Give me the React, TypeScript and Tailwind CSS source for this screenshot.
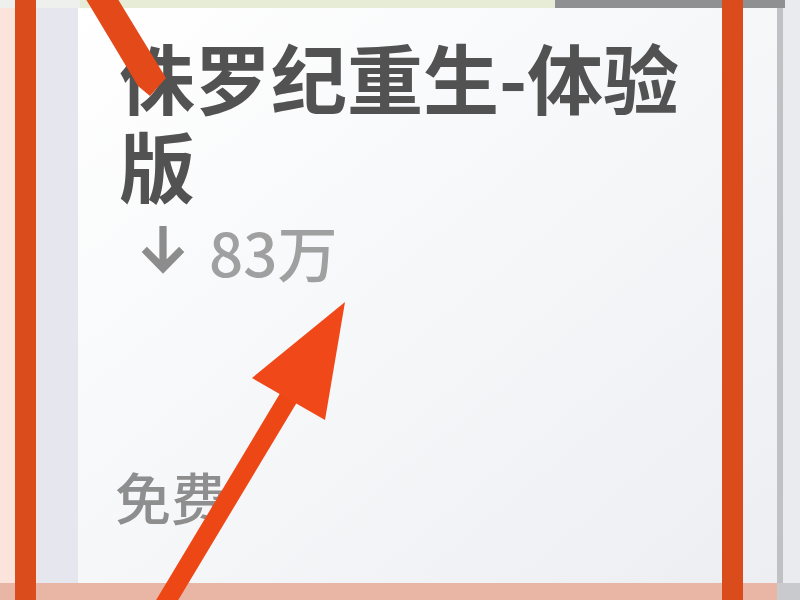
import React from "react";

const CJK = { fontFamily: '"Noto Sans CJK SC", "Noto Sans", sans-serif' };

function DownloadIcon() {
  return (
    <svg width="48" height="54" viewBox="0 0 46 52" className="shrink-0">
      <path d="M19.5 2h7v32l12-12 5 5L23 48 2.5 27l5-5 12 12z" fill="#8c8c8c" />
    </svg>
  );
}

function Annotations() {
  return (
    <svg
      className="absolute inset-0 pointer-events-none"
      width="800"
      height="600"
      viewBox="0 0 800 600"
    >
      {/* frame sides */}
      <rect x="15" y="0" width="21" height="600" fill="#da4c1c" />
      <rect x="722" y="0" width="21" height="600" fill="#da4c1c" />
      {/* top-left pointer */}
      <path d="M84 -4 L116 -4 L166 78 L150 96 L138 86 Z" fill="#e4491a" />
      {/* bottom pointer */}
      <line x1="160" y1="612" x2="298" y2="382" stroke="#ee4716" strokeWidth="19" />
      <polygon points="345,302 252,378 325,420" fill="#f04818" />
    </svg>
  );
}

export default function App() {
  return (
    <div className="relative w-[800px] h-[600px] overflow-hidden bg-[#eceef1] flex flex-col" style={CJK}>
      {/* top strip */}
      <div className="flex h-[8px] shrink-0">
        <div className="w-[80px] bg-[#eef0ee]" />
        <div className="w-[475px] bg-[#e6ecd5]" />
        <div className="w-[230px] bg-[#8e9091]" />
        <div className="flex-1 bg-[#e9ebee]" />
      </div>

      <div className="flex flex-1 min-h-0">
        <div className="w-[37px] bg-[#fbe4dc]" />
        <div className="w-[41px] bg-[#e5e6ee]" />
        {/* card */}
        <div className="w-[705px] bg-gradient-to-br from-white via-[#f6f7f9] to-[#eceef2] border-r-[6px] border-[#bfc1c5] pl-[41px] pt-[24px] flex flex-col">
          <div className="w-[600px] text-[76px] leading-[88px] font-bold text-[#525252]">
            侏罗纪重生-体验
            <br />
            版
          </div>
          <div className="flex items-center gap-[22px] mt-[11px] pl-[20px]">
            <DownloadIcon />
            <span className="text-[60px] leading-[64px] text-[#a0a0a0] font-medium">83万</span>
          </div>
          <div className="mt-auto mb-[55px] text-[56px] leading-[64px] text-[#8e8e8e] font-medium -ml-[4px]">
            免费
          </div>
        </div>
        <div className="flex-1 bg-[#e9ebee]" />
      </div>

      {/* bottom strip */}
      <div className="flex h-[17px] shrink-0">
        <div className="w-[777px] bg-[#e9b6a5]" />
        <div className="flex-1 bg-[#c9cacd]" />
      </div>

      <Annotations />
    </div>
  );
}
